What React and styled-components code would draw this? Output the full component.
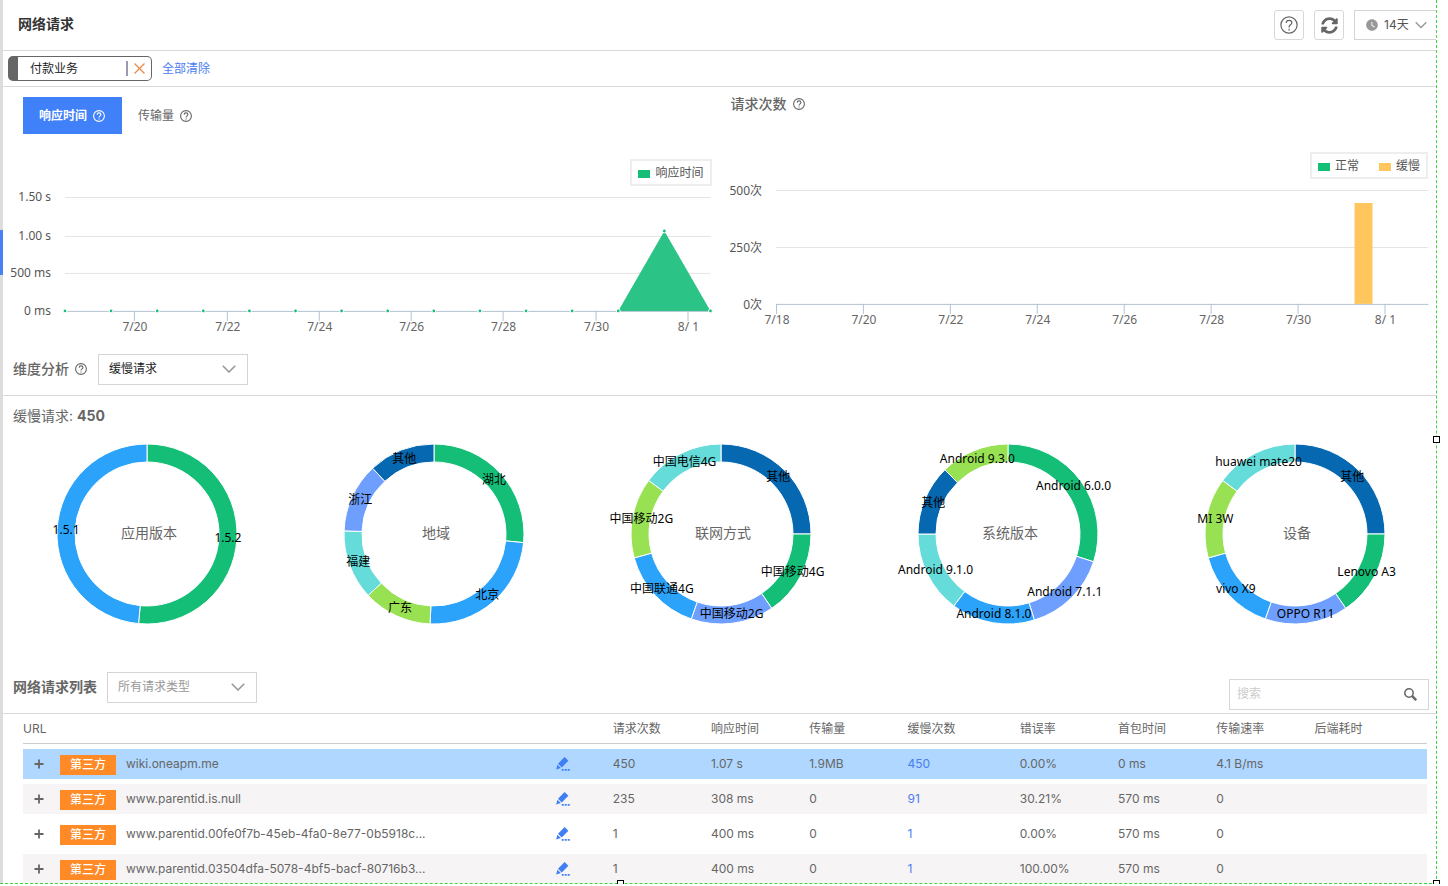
import React, { useState } from 'react';
import styled, { createGlobalStyle } from 'styled-components';
import { FaSyncAlt } from 'react-icons/fa';
import { MdWatchLater } from 'react-icons/md';

const uiFont = `Inter, 'Noto Sans CJK SC', sans-serif`;
const chartFont = `'Noto Sans', 'Noto Sans CJK SC', sans-serif`;

const palette = {
  green: '#14be77',
  blue: '#2ba3fb',
  lime: '#97e152',
  aqua: '#66dcda',
  violet: '#6f9ffe',
  navy: '#0668b0',
  yellow: '#fec65d',
};

const GlobalStyle = createGlobalStyle`
  * {
    box-sizing: border-box;
  }
  body {
    margin: 0;
    background: #fff;
    color: #666;
    font: 12px/20px ${uiFont};
  }
  button, input, select {
    font: inherit;
    color: inherit;
  }
  svg {
    display: block;
    flex: none;
  }
`;

const Frame = styled.div`
  display: flex;
  position: relative;
  margin-right: 11px;
  border-right: 1px dashed #3fd63f;
  border-bottom: 1px dashed #3fd63f;
`;

const Handle = styled.i`
  position: absolute;
  width: 7px;
  height: 7px;
  border: 1px solid #000;
  background: #fff;
  ${({ $place }) =>
    ({
      right: 'right: -4px; top: calc(50% - 5px);',
      bottom: 'bottom: -4px; left: 43%;',
      corner: 'right: -4px; bottom: -4px;',
    })[$place]}
`;

const Rail = styled.div`
  flex: none;
  width: 3px;
  padding-top: 230px;
  background: #dcdcdc;
`;

const RailMark = styled.div`
  height: 45px;
  background: #4a80f5;
`;

const Main = styled.main`
  flex: 1;
  min-width: 0;
`;

const Header = styled.header`
  display: flex;
  align-items: center;
  gap: 10px;
  height: 51px;
  padding-left: 15px;
  border-bottom: 1px solid #d8dada;
`;

const PageTitle = styled.h1`
  flex: 1;
  margin: 0;
  padding-bottom: 2px;
  color: #333;
  font-size: 14px;
  font-weight: 700;
`;

const IconButton = styled.button`
  display: flex;
  align-items: center;
  justify-content: center;
  width: 30px;
  height: 30px;
  padding: 0;
  border: 1px solid #d8d8d8;
  border-radius: 3px;
  background: #fff;
`;

const SelectBox = styled.label`
  display: flex;
  align-items: center;
  width: ${({ $range }) => ($range ? '82px' : '150px')};
  height: ${({ $range }) => ($range ? '30px' : '31px')};
  padding: 0 ${({ $range }) => ($range ? '9px' : '11px')} 0 10px;
  border: 1px solid #d4d4d4;
  ${({ $range }) => $range && 'border-right: 0;'}
  color: ${({ $tone }) => $tone || '#666'};
`;

const Select = styled.select`
  flex: 1;
  min-width: 0;
  height: 20px;
  margin-bottom: 1px;
  padding: 0;
  border: 0;
  outline: 0;
  background: none;
  appearance: none;
`;

const RangeSelect = styled(Select)`
  padding-left: 5px;
  color: #555;
`;

const FilterBar = styled.div`
  display: flex;
  align-items: center;
  gap: 10px;
  height: 36px;
  padding-left: 5px;
  border-bottom: 1px solid #d8dada;
`;

const Tag = styled.div`
  display: flex;
  align-items: center;
  width: 144px;
  height: 25px;
  padding-left: 12px;
  border: 1px solid #666;
  border-left-width: 10px;
  border-radius: 5px;
  color: #222;
`;

const TagText = styled.span`
  flex: 1;
`;

const RemoveButton = styled.button`
  display: flex;
  height: 15px;
  align-items: center;
  padding: 0 6px;
  border: 0;
  border-left: 2px solid #9a9ab0;
  background: none;
`;

const Anchor = styled.a`
  color: #4a7df0;
  text-decoration: none;
`;

const Charts = styled.section`
  display: grid;
  grid-template-columns: 1fr 1fr;
`;

const ChartPanel = styled.div`
  min-width: 0;
`;

const Tabs = styled.div`
  display: flex;
  padding: 10px 0 0 20px;
`;

const Tab = styled.button`
  display: flex;
  align-items: center;
  gap: 6px;
  height: 37px;
  padding: 1px 17px 0 16px;
  border: 0;
  background: ${({ $active }) => ($active ? '#4080f8' : 'none')};
  color: ${({ $active }) => ($active ? '#fff' : '#666')};
  font-weight: ${({ $active }) => ($active ? 700 : 400)};
`;

const SectionTitle = styled.h2`
  display: flex;
  align-items: center;
  gap: 6px;
  margin: 0;
  color: #666;
  font-size: 14px;
  font-weight: ${({ $strong }) => ($strong ? 700 : 500)};
`;

const ChartTitle = styled(SectionTitle)`
  height: 34px;
  padding-left: 11px;
`;

const LegendRow = styled.div`
  display: flex;
  justify-content: flex-end;
  padding: ${({ $top }) => $top}px 8px 0 0;
`;

const Legend = styled.div`
  display: flex;
  gap: 20px;
  height: 27px;
  padding: 0 6px;
  border: 2px solid #eee;
  color: #555;
  line-height: 24px;
`;

const LegendItem = styled.span`
  display: flex;
  align-items: center;
  gap: 5px;

  &::before {
    content: '';
    width: 12px;
    height: 8px;
    margin-top: 2px;
    background: ${({ $color }) => $color};
  }
`;

const Plot = styled.svg`
  width: 100%;
  overflow: visible;
  font: 12px ${chartFont};
`;

const AnalysisBar = styled.div`
  display: flex;
  align-items: center;
  gap: 11px;
  height: 52px;
  padding-left: 10px;
  border-bottom: 1px solid #d8dada;
`;

const Summary = styled.p`
  margin: 0;
  padding: 10px 10px 8px;
  font-size: 14px;
`;

const Donuts = styled.section`
  display: grid;
  grid-template-columns: repeat(5, 1fr);
  margin-right: -2px;
`;

const ListBar = styled.div`
  display: flex;
  align-items: center;
  gap: 10px;
  height: 52px;
  margin-top: 28px;
  padding: 0 7px 0 10px;
  border-bottom: 1px solid #d8dada;
`;

const SearchBox = styled.label`
  display: flex;
  align-items: center;
  align-self: flex-end;
  width: 200px;
  height: 31px;
  margin: 0 0 3px auto;
  padding: 0 11px 0 7px;
  border: 1px solid #d4d8d8;
`;

const SearchInput = styled.input`
  flex: 1;
  min-width: 0;
  padding: 0;
  border: 0;
  outline: 0;
  background: none;

  &::placeholder {
    color: #ccc;
  }
`;

const TableWrap = styled.div`
  overflow: hidden;
  padding: 0 9px 0 20px;
`;

const Table = styled.table`
  width: 100%;
  margin-bottom: -6px;
  border-spacing: 0 5px;
  table-layout: fixed;
`;

const HeadCell = styled.th`
  width: ${({ $width }) => $width}%;
  height: 25px;
  padding: 0 0 4px;
  border-bottom: 1px solid #ccc;
  font-weight: 400;
  text-align: left;
`;

const Row = styled.tr`
  background: ${({ $selected }) => ($selected ? '#afd7ff' : '#fff')};

  &:nth-child(even) {
    background: #f6f4f5;
  }
`;

const Cell = styled.td`
  height: 30px;
  padding: 0;
`;

const UrlCell = styled.div`
  display: flex;
  align-items: center;
  padding: 0 43px 0 11px;
`;

const PlainButton = styled.button`
  display: flex;
  padding: 0;
  border: 0;
  background: none;
`;

const Badge = styled.span`
  width: 56px;
  margin: 2px 10px 0 16px;
  background: #ff8a26;
  color: #fff;
  font-weight: 500;
  text-align: center;
`;

const Url = styled.span`
  flex: 1;
  min-width: 0;
`;

const Help = ({ size = 12, thin }) => (
  <svg width={size} height={size} viewBox="0 0 24 24" fill="none" stroke="currentColor" strokeWidth={thin ? 1.6 : 2.2}>
    <circle cx="12" cy="12" r="10.8" />
    <path d="M8.3 9.4c0-2.2 1.6-3.7 3.8-3.7s3.7 1.4 3.7 3.3c0 2.6-3.7 2.7-3.7 5.7v.5" />
    <path d="M12.1 17v2.2" />
  </svg>
);

const Chevron = ({ width = 14 }) => (
  <svg width={width} height="8" viewBox="0 0 14 8" fill="none" stroke="#999" strokeWidth="1.6">
    <path d="M.8.8 7 7 13.2.8" />
  </svg>
);

const Close = () => (
  <svg width="11" height="11" viewBox="0 0 11 11" stroke="#e88a45" strokeWidth="1.3">
    <path d="M.5.5l10 10M10.5.5l-10 10" />
  </svg>
);

const Plus = () => (
  <svg width="10" height="10" viewBox="0 0 10 10" stroke="#666" strokeWidth="1.8">
    <path d="M5 .5v9M.5 5h9" />
  </svg>
);

const SearchIcon = () => (
  <svg width="13" height="13" viewBox="0 0 13 13" fill="none" stroke="#666">
    <circle cx="5" cy="5" r="4.2" strokeWidth="1.5" />
    <path d="M8.2 8.2l4 4" strokeWidth="2.4" />
  </svg>
);

const Pencil = () => (
  <svg width="14" height="14" viewBox="0 0 14 14" fill="#3f7ef5">
    <path d="M8.6 0 12.4 3.7 5.8 10.4 2 6.7z" />
    <path d="M1.4 7.7l3.4 3.4L.2 12.4z" />
    <path d="M5.7 12.1h2v1.6h-2zM8.7 12.1h2v1.6h-2zM11.7 12.1h2v1.6h-2z" />
  </svg>
);

const ResponseChart = () => {
  const left = 62;
  const right = 708;
  const base = 125;
  const step = (right - left) / 14;
  const points = Array.from({ length: 15 }, (_, i) => [left + i * step, i === 13 ? 45 : base]);
  const grid = [
    ['1.50 s', 11],
    ['1.00 s', 50],
    ['500 ms', 87],
    ['0 ms', base],
  ];
  const days = ['7/20', '7/22', '7/24', '7/26', '7/28', '7/30', '8/ 1'];

  return (
    <Plot viewBox="0 0 717 158">
      {grid.map(([label, y], i) => (
        <g key={label}>
          <path d={`M${left} ${y + 0.5}H${right}`} stroke={i === 3 ? '#b3c3d3' : '#e4e4e4'} />
          <text x="48" y={y + 4} textAnchor="end" fill="#555">{label}</text>
        </g>
      ))}
      {days.map((day, i) => {
        const x = Math.round(left + (1.5 + i * 2) * step);
        return (
          <g key={day}>
            <path d={`M${x + 0.5} ${base}v10`} stroke="#b3c3d3" />
            <text x={x + 1} y={base + 20} textAnchor="middle" fill="#666">{day}</text>
          </g>
        );
      })}
      <path d={`M${points[12]}L${points[13]}L${points[14]}z`} fill="#2cc386" />
      {points.map(([x, y]) => (
        <circle key={x} cx={x} cy={y} r="1.9" fill={palette.green} stroke="#fff" strokeWidth="1" />
      ))}
    </Plot>
  );
};

const RequestChart = () => {
  const left = 56;
  const right = 709;
  const base = 125;
  const grid = [
    ['500次', 11],
    ['250次', 68],
    ['0次', base],
  ];
  const days = ['7/18', '7/20', '7/22', '7/24', '7/26', '7/28', '7/30', '8/ 1'];

  return (
    <Plot viewBox="0 0 717 158">
      {grid.map(([label, y], i) => (
        <g key={label}>
          <path d={`M${left} ${y + 0.5}H${right}`} stroke={i === 2 ? '#b3c3d3' : '#e4e4e4'} />
          <text x="42" y={y + 5} textAnchor="end" fill="#555">{label}</text>
        </g>
      ))}
      {days.map((day, i) => {
        const x = left + i * 87;
        return (
          <g key={day}>
            <path d={`M${x + 0.5} ${base}v10`} stroke="#b3c3d3" />
            <text x={x + 1} y={base + 20} textAnchor="middle" fill="#666">{day}</text>
          </g>
        );
      })}
      <rect x="635" y="24" width="18" height="101" fill={palette.yellow} />
    </Plot>
  );
};

const at = (angle, r) => {
  const rad = (angle * Math.PI) / 180;
  return [Math.sin(rad) * r, -Math.cos(rad) * r];
};

// each part is [label, end angle in degrees, colour]
const donuts = [
  { name: '应用版本', parts: [['1.5.2', 185.4, 'green'], ['1.5.1', 360, 'blue']] },
  {
    name: '地域',
    parts: [
      ['湖北', 95.5, 'green'],
      ['北京', 182.5, 'blue'],
      ['广东', 227, 'lime'],
      ['福建', 272, 'aqua'],
      ['浙江', 317, 'violet'],
      ['其他', 360, 'navy'],
    ],
  },
  {
    name: '联网方式',
    parts: [
      ['其他', 90, 'navy'],
      ['中国移动4G', 145.7, 'green'],
      ['中国移动2G', 199.3, 'violet'],
      ['中国联通4G', 254.6, 'blue'],
      ['中国移动2G', 306.5, 'lime'],
      ['中国电信4G', 360, 'aqua'],
    ],
  },
  {
    name: '系统版本',
    parts: [
      ['Android 6.0.0', 108, 'green'],
      ['Android 7.1.1', 163, 'violet'],
      ['Android 8.1.0', 217, 'blue'],
      ['Android 9.1.0', 270, 'aqua'],
      ['其他', 315.5, 'navy'],
      ['Android 9.3.0', 360, 'lime'],
    ],
  },
  {
    name: '设备',
    parts: [
      ['其他', 90, 'navy'],
      ['Lenovo A3', 145.7, 'green'],
      ['OPPO R11', 199.3, 'violet'],
      ['vivo X9', 254.6, 'blue'],
      ['MI 3W', 306.5, 'lime'],
      ['huawei mate20', 360, 'aqua'],
    ],
  },
];

const Donut = ({ name, parts }) => {
  const arcs = parts.map(([label, end, color], i) => {
    const start = i ? parts[i - 1][1] : 0;
    const big = end - start > 180 ? 1 : 0;
    const d = `M${at(start, 90)}A90 90 0 ${big} 1 ${at(end, 90)}L${at(end, 72)}A72 72 0 ${big} 0 ${at(start, 72)}z`;
    return { label, color, d, pos: at((start + end) / 2, 81) };
  });

  return (
    <Plot viewBox="-144 -100 287 200">
      {arcs.map(({ d, color }) => (
        <path key={d} d={d} fill={palette[color]} stroke="#fff" />
      ))}
      {arcs.map(({ d, label, pos }) => (
        <text key={d} x={pos[0]} y={pos[1] + 4} textAnchor="middle" fill="#000">{label}</text>
      ))}
      <text x="2" y="4" textAnchor="middle" fontSize="14" fill="#666">{name}</text>
    </Plot>
  );
};

const columns = [
  ['URL', 42],
  ['请求次数', 7],
  ['响应时间', 7],
  ['传输量', 7],
  ['缓慢次数', 8],
  ['错误率', 7],
  ['首包时间', 7],
  ['传输速率', 7],
  ['后端耗时', 8],
];

const rows = [
  ['wiki.oneapm.me', '450', '1.07 s', '1.9MB', '450', '0.00%', '0 ms', '4.1 B/ms', ''],
  ['www.parentid.is.null', '235', '308 ms', '0', '91', '30.21%', '570 ms', '0', ''],
  ['www.parentid.00fe0f7b-45eb-4fa0-8e77-0b5918c...', '1', '400 ms', '0', '1', '0.00%', '570 ms', '0', ''],
  ['www.parentid.03504dfa-5078-4bf5-bacf-80716b3...', '1', '400 ms', '0', '1', '100.00%', '570 ms', '0', ''],
];

const RequestTable = () => (
  <TableWrap>
    <Table>
      <thead>
        <tr>
          {columns.map(([label, width]) => (
            <HeadCell key={label} $width={width}>{label}</HeadCell>
          ))}
        </tr>
      </thead>
      <tbody>
        {rows.map(([url, ...values], i) => (
          <Row key={url} $selected={i === 0}>
            <Cell>
              <UrlCell>
                <PlainButton aria-label="展开"><Plus /></PlainButton>
                <Badge>第三方</Badge>
                <Url>{url}</Url>
                <PlainButton aria-label="编辑"><Pencil /></PlainButton>
              </UrlCell>
            </Cell>
            {values.map((value, n) => (
              <Cell key={n}>{n === 3 ? <Anchor href="#slow">{value}</Anchor> : value}</Cell>
            ))}
          </Row>
        ))}
      </tbody>
    </Table>
  </TableWrap>
);

const App = () => {
  const [tab, setTab] = useState('time');

  return (
    <>
      <GlobalStyle />
      <Frame>
        <Rail>
          <RailMark />
        </Rail>
        <Main>
          <Header>
            <PageTitle>网络请求</PageTitle>
            <IconButton aria-label="帮助"><Help size={18} thin /></IconButton>
            <IconButton aria-label="刷新"><FaSyncAlt size={17} /></IconButton>
            <SelectBox $range>
              <MdWatchLater size={14} color="#999" />
              <RangeSelect aria-label="时间范围">
                <option>14天</option>
              </RangeSelect>
              <Chevron width={12} />
            </SelectBox>
          </Header>
          <FilterBar>
            <Tag>
              <TagText>付款业务</TagText>
              <RemoveButton aria-label="移除"><Close /></RemoveButton>
            </Tag>
            <Anchor href="#clear">全部清除</Anchor>
          </FilterBar>
          <Charts>
            <ChartPanel>
              <Tabs>
                <Tab $active={tab === 'time'} onClick={() => setTab('time')}>响应时间 <Help /></Tab>
                <Tab $active={tab === 'size'} onClick={() => setTab('size')}>传输量 <Help /></Tab>
              </Tabs>
              <LegendRow $top={25}>
                <Legend>
                  <LegendItem $color={palette.green}>响应时间</LegendItem>
                </Legend>
              </LegendRow>
              <ResponseChart />
            </ChartPanel>
            <ChartPanel>
              <ChartTitle>请求次数 <Help /></ChartTitle>
              <LegendRow $top={31}>
                <Legend>
                  <LegendItem $color={palette.green}>正常</LegendItem>
                  <LegendItem $color={palette.yellow}>缓慢</LegendItem>
                </Legend>
              </LegendRow>
              <RequestChart />
            </ChartPanel>
          </Charts>
          <AnalysisBar>
            <SectionTitle>维度分析 <Help /></SectionTitle>
            <SelectBox $tone="#222">
              <Select aria-label="维度分析">
                <option>缓慢请求</option>
              </Select>
              <Chevron />
            </SelectBox>
          </AnalysisBar>
          <Summary>缓慢请求: <b>450</b></Summary>
          <Donuts>
            {donuts.map((donut) => (
              <Donut key={donut.name} {...donut} />
            ))}
          </Donuts>
          <ListBar>
            <SectionTitle $strong>网络请求列表</SectionTitle>
            <SelectBox $tone="#999">
              <Select aria-label="请求类型">
                <option>所有请求类型</option>
              </Select>
              <Chevron />
            </SelectBox>
            <SearchBox>
              <SearchInput type="text" placeholder="搜索" aria-label="搜索" />
              <SearchIcon />
            </SearchBox>
          </ListBar>
          <RequestTable />
        </Main>
        <Handle $place="right" />
        <Handle $place="bottom" />
        <Handle $place="corner" />
      </Frame>
    </>
  );
};

export default App;
